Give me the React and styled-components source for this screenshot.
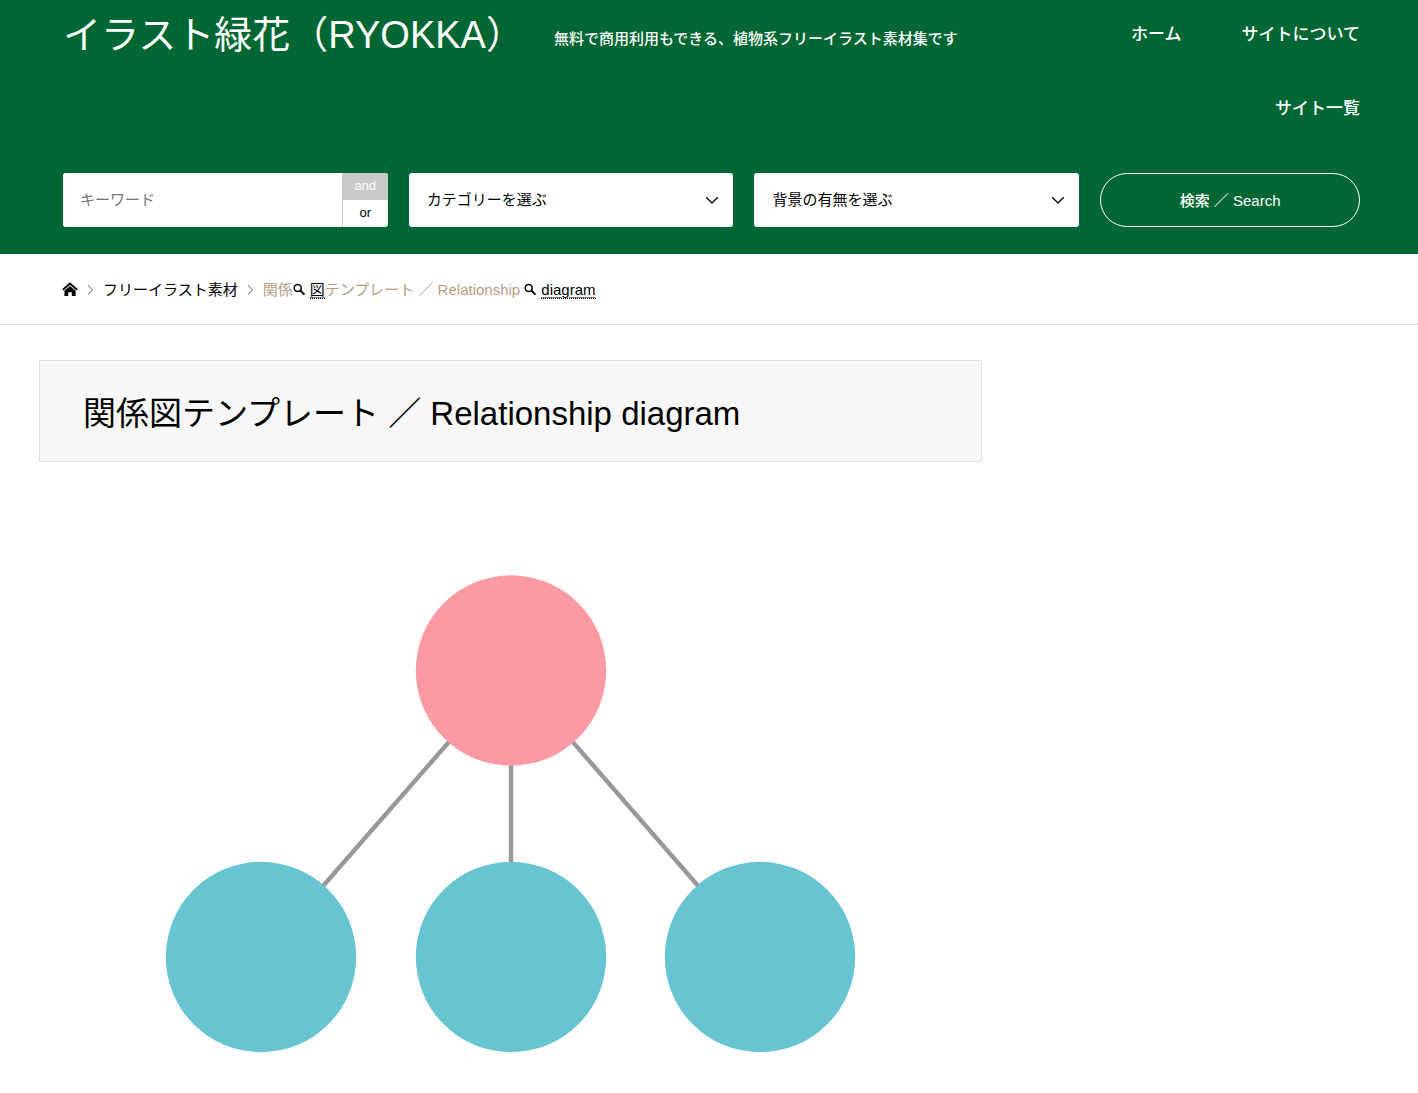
import styled, { createGlobalStyle } from 'styled-components';

const colors = {
    primary: '#006633',
    text: '#000',
    current: '#b69e84',
    border: '#e0e0e0',
    toggle: '#c9c9c9',
    root: '#fc9aa4',
    child: '#67c4d1',
    line: '#989898'
}

const GlobalStyle = createGlobalStyle`
    * {
        box-sizing: border-box;
    }

    body {
        margin: 0;
        background: #fff;
        color: ${colors.text};
        font-family: "Liberation Sans", "Noto Sans CJK JP", sans-serif;
        font-size: 15px;
    }

    a {
        color: inherit;
        text-decoration: none;
    }

    input, select, button {
        font-family: inherit;
        font-size: 15px;
    }
`

const Header = styled.header`
    padding: 0 58px 27px 63px;
    background: ${colors.primary};
    color: #fff;
`

const HeaderTop = styled.div`
    display: flex;
    align-items: flex-start;
`

const SiteName = styled.h1`
    margin: 0 30px 0 0;
    font-size: 38px;
    font-weight: 400;
    line-height: 70px;
    white-space: nowrap;
`

const Tagline = styled.p`
    margin: 0;
    font-weight: 500;
    line-height: 78px;
    white-space: nowrap;
`

const Nav = styled.nav`
    flex: 1;
    margin-left: 40px;
`

const NavList = styled.ul`
    display: flex;
    flex-wrap: wrap;
    justify-content: flex-end;
    gap: 4px 60px;
    margin: 0;
    padding: 0;
    list-style: none;
    font-size: 17px;
    font-weight: 500;
    line-height: 70px;
    white-space: nowrap;
`

const SearchForm = styled.form`
    display: grid;
    grid-template-columns: 5fr 5fr 5fr 4fr;
    gap: 21px;
    margin-top: 29px;
`

const KeywordField = styled.div`
    display: flex;
    height: 54px;
    overflow: hidden;
    border-radius: 3px;
    background: #fff;
`

const KeywordInput = styled.input`
    flex: 1;
    min-width: 0;
    padding: 0 17px 2px;
    border: 0;
    background: #fff;

    &::placeholder {
        color: #757575;
        opacity: 1;
    }
`

const Toggle = styled.div`
    display: flex;
    flex-direction: column;
    width: 46px;
    border-left: 1px solid ${colors.toggle};
    color: #000;
`

const ToggleOption = styled.label`
    position: relative;
    flex: 1;
    font-size: 13px;
    line-height: 26px;
    text-align: center;
    cursor: pointer;

    &:has(input:checked) {
        background: ${colors.toggle};
        color: #fff;
    }

    input {
        position: absolute;
        inset: 0;
        width: 100%;
        height: 100%;
        margin: 0;
        appearance: none;
        cursor: pointer;
    }
`

const SelectField = styled.div`
    position: relative;

    svg {
        position: absolute;
        top: 23px;
        right: 14px;
        pointer-events: none;
    }
`

const Select = styled.select`
    display: block;
    width: 100%;
    height: 54px;
    padding: 0 40px 2px 18px;
    border: 0;
    border-radius: 3px;
    background: #fff;
    color: #000;
    appearance: none;
`

const SearchButton = styled.button`
    height: 54px;
    padding: 0 0 2px;
    border: 1px solid #fff;
    border-radius: 27px;
    background: transparent;
    color: #fff;
    font-weight: 500;
    cursor: pointer;
`

const Breadcrumb = styled.nav`
    border-bottom: 1px solid ${colors.border};

    ol {
        display: flex;
        align-items: center;
        gap: 9px;
        margin: 0;
        padding: 2px 58px 0 62px;
        list-style: none;
        line-height: 68px;
        white-space: nowrap;
    }

    li {
        display: flex;
        align-items: center;
        gap: 9px;
    }
`

const HomeLink = styled.a`
    display: flex;
`

const Current = styled.span`
    color: ${colors.current};
`

const Keyword = styled.a`
    color: #000;

    svg {
        margin-right: 4px;
        vertical-align: -1px;
    }

    span {
        border-bottom: 1px dotted #000;
        text-decoration: underline;
        text-decoration-color: #777;
        text-underline-offset: 2px;
    }
`

const Layout = styled.div`
    display: grid;
    grid-template-columns: minmax(0, 1fr) 334px;
    gap: 45px;
    padding: 35px 57px 0 39px;
`

const ArticleTitle = styled.h2`
    margin: 0;
    padding: 5px 43px 0;
    border: 1px solid ${colors.border};
    background: #f7f7f7;
    font-size: 33px;
    font-weight: 400;
    line-height: 95px;
`

const Figure = styled.figure`
    margin: 38px 0 0;

    svg {
        display: block;
        width: 100%;
    }
`

const menu = ['ホーム', 'サイトについて', 'サイト一覧']

// x position of each node of the second row
const children = [222, 472, 721]

function Chevron(){
    return (
        <svg width="14" height="9" viewBox="0 0 14 9" fill="none" stroke="#111" strokeWidth="1.5" aria-hidden="true">
            <path d="M1.2 1.3 7 7l5.8-5.7"/>
        </svg>
    )
}

function Separator(){
    return (
        <svg width="7" height="10" viewBox="0 0 7 10" fill="none" stroke="#555" aria-hidden="true">
            <path d="M1 .6 5.6 5 1 9.4"/>
        </svg>
    )
}

function HomeIcon(){
    return (
        <svg width="16" height="16" viewBox="0 .5 16 16" aria-hidden="true">
            <path d="M.9 8.2 8 2.1l7.1 6.1" fill="none" stroke="#000" strokeWidth="2"/>
            <path d="M2.4 9.2 8 4.6l5.6 4.6v5.3H9.8v-3.8H6.2v3.8H2.4z" fill="#000"/>
        </svg>
    )
}

function SearchIcon(){
    return (
        <svg width="13" height="13" viewBox="0 0 13 13" fill="none" stroke="#000" aria-hidden="true">
            <circle cx="4.7" cy="4.9" r="3.5" strokeWidth="1.5"/>
            <path d="m7.3 7.5 4.2 4.2" strokeWidth="1.8"/>
        </svg>
    )
}

function SearchSelect({ name, label }){
    return (
        <SelectField>
            <Select name={name} aria-label={label} defaultValue="">
                <option value="">{label}</option>
            </Select>
            <Chevron/>
        </SelectField>
    )
}

function Diagram(){
    return (
        <svg viewBox="0 0 943 593" role="img" aria-label="関係図テンプレート">
            <g stroke={colors.line} strokeWidth="4.4">
                {children.map((x) => (
                    <path key={x} d={`M472 171 ${x} 457`}/>
                ))}
            </g>
            <circle cx="472" cy="170.5" r="95.2" fill={colors.root}/>
            {children.map((x) => (
                <circle key={x} cx={x} cy="457" r="95.2" fill={colors.child}/>
            ))}
        </svg>
    )
}

function App(){
    return (
        <>
            <GlobalStyle/>
            <Header>
                <HeaderTop>
                    <SiteName><a href="#home">イラスト緑花（RYOKKA）</a></SiteName>
                    <Tagline>無料で商用利用もできる、植物系フリーイラスト素材集です</Tagline>
                    <Nav>
                        <NavList>
                            {menu.map((item) => (
                                <li key={item}><a href="#menu">{item}</a></li>
                            ))}
                        </NavList>
                    </Nav>
                </HeaderTop>
                <SearchForm onSubmit={(e) => e.preventDefault()}>
                    <KeywordField>
                        <KeywordInput type="text" name="keyword" placeholder="キーワード" aria-label="キーワード"/>
                        <Toggle>
                            <ToggleOption>
                                <input type="radio" name="operator" value="and" defaultChecked/>
                                and
                            </ToggleOption>
                            <ToggleOption>
                                <input type="radio" name="operator" value="or"/>
                                or
                            </ToggleOption>
                        </Toggle>
                    </KeywordField>
                    <SearchSelect name="category" label="カテゴリーを選ぶ"/>
                    <SearchSelect name="background" label="背景の有無を選ぶ"/>
                    <SearchButton type="submit">検索 ／ Search</SearchButton>
                </SearchForm>
            </Header>
            <Breadcrumb>
                <ol>
                    <li><HomeLink href="#home" aria-label="ホーム"><HomeIcon/></HomeLink><Separator/></li>
                    <li><a href="#illust">フリーイラスト素材</a><Separator/></li>
                    <li>
                        <Current>
                            関係<Keyword href="#zu"><SearchIcon/><span>図</span></Keyword>テンプレート ／ Relationship <Keyword href="#diagram"><SearchIcon/><span>diagram</span></Keyword>
                        </Current>
                    </li>
                </ol>
            </Breadcrumb>
            <Layout>
                <main>
                    <ArticleTitle>関係図テンプレート ／ Relationship diagram</ArticleTitle>
                    <Figure>
                        <Diagram/>
                    </Figure>
                </main>
            </Layout>
        </>
    )
}

export default App;
